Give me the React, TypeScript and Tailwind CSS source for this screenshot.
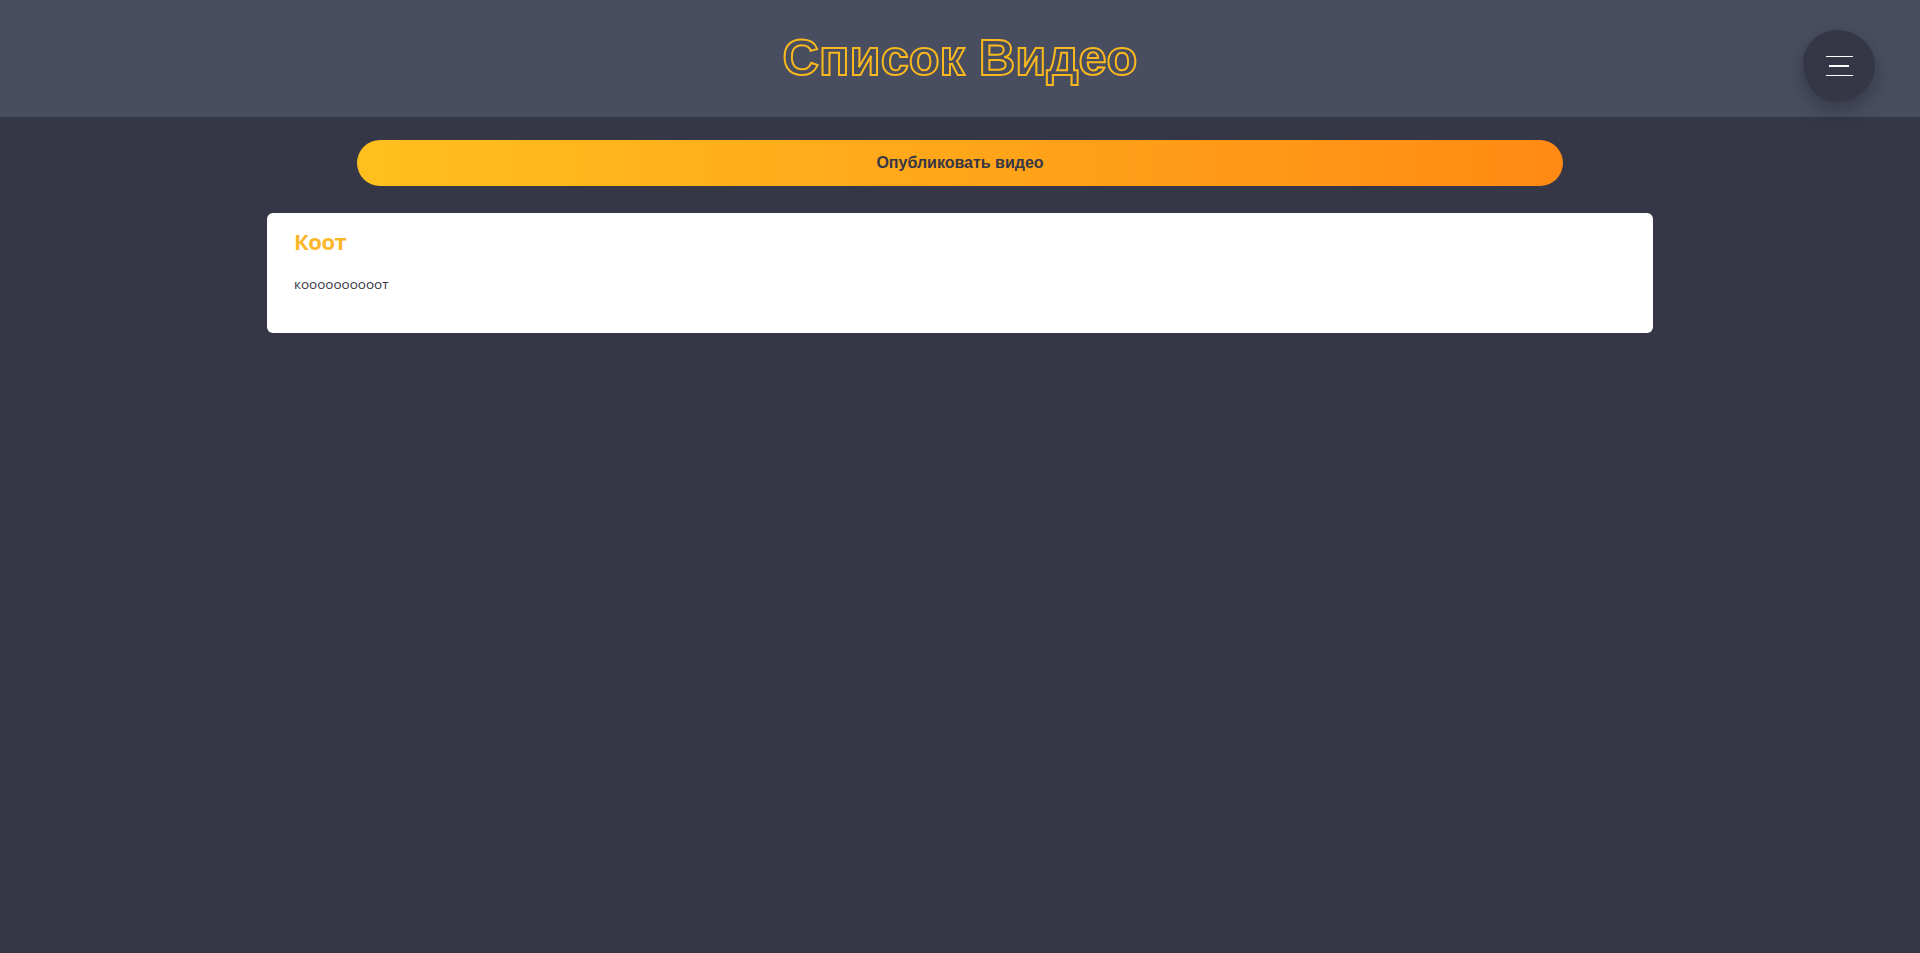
const videos = [{ id: 1, title: "Коот", description: "коооооооооот" }];

function MenuButton() {
  return (
    <button
      type="button"
      aria-label="menu"
      className="absolute right-[45px] top-[30px] flex h-[72px] w-[72px] flex-col items-center justify-center gap-[8px] rounded-[48%_52%_55%_45%/45%_50%_50%_55%] bg-[#353646] shadow-[0_8px_20px_rgba(0,0,0,0.25)]"
    >
      <span className="block h-px w-[27px] bg-white" />
      <span className="block h-[2px] w-[20px] bg-white" />
      <span className="block h-px w-[27px] bg-white" />
    </button>
  );
}

export default function App() {
  return (
    <div
      className="min-h-[953px] bg-[#353646]"
      style={{ fontFamily: "'Open Sans', sans-serif" }}
    >
      <header className="relative flex h-[117px] items-center justify-center bg-[#484d60]">
        <h1
          className="text-[50.5px] font-bold leading-none text-transparent [-webkit-text-stroke:2px_#f8b81e]"
          style={{ fontFamily: "'Liberation Sans', Arial, sans-serif" }}
        >
          Список Видео
        </h1>
        <MenuButton />
      </header>

      <main className="flex flex-col items-center pt-[23px]">
        <button
          type="button"
          className="h-[46px] w-[1206px] rounded-full bg-gradient-to-r from-[#ffc01e] to-[#ff8a14] text-[16px] font-bold text-[#353646]"
          style={{ fontFamily: "'Liberation Sans', Arial, sans-serif" }}
        >
          Опубликовать видео
        </button>

        <div className="mt-[27px] flex w-[1386px] flex-col gap-3">
          {videos.map((v) => (
            <div key={v.id} className="rounded-[6px] bg-white px-[27px] pb-[39px] pt-[12px]">
              <h2 className="text-[22px] font-bold leading-[1.5] tracking-[-0.5px] text-[#fbb62a]">
                {v.title}
              </h2>
              <p className="mt-[16px] text-[13.5px] leading-[1.5] text-[#353646]">{v.description}</p>
            </div>
          ))}
        </div>
      </main>
    </div>
  );
}
